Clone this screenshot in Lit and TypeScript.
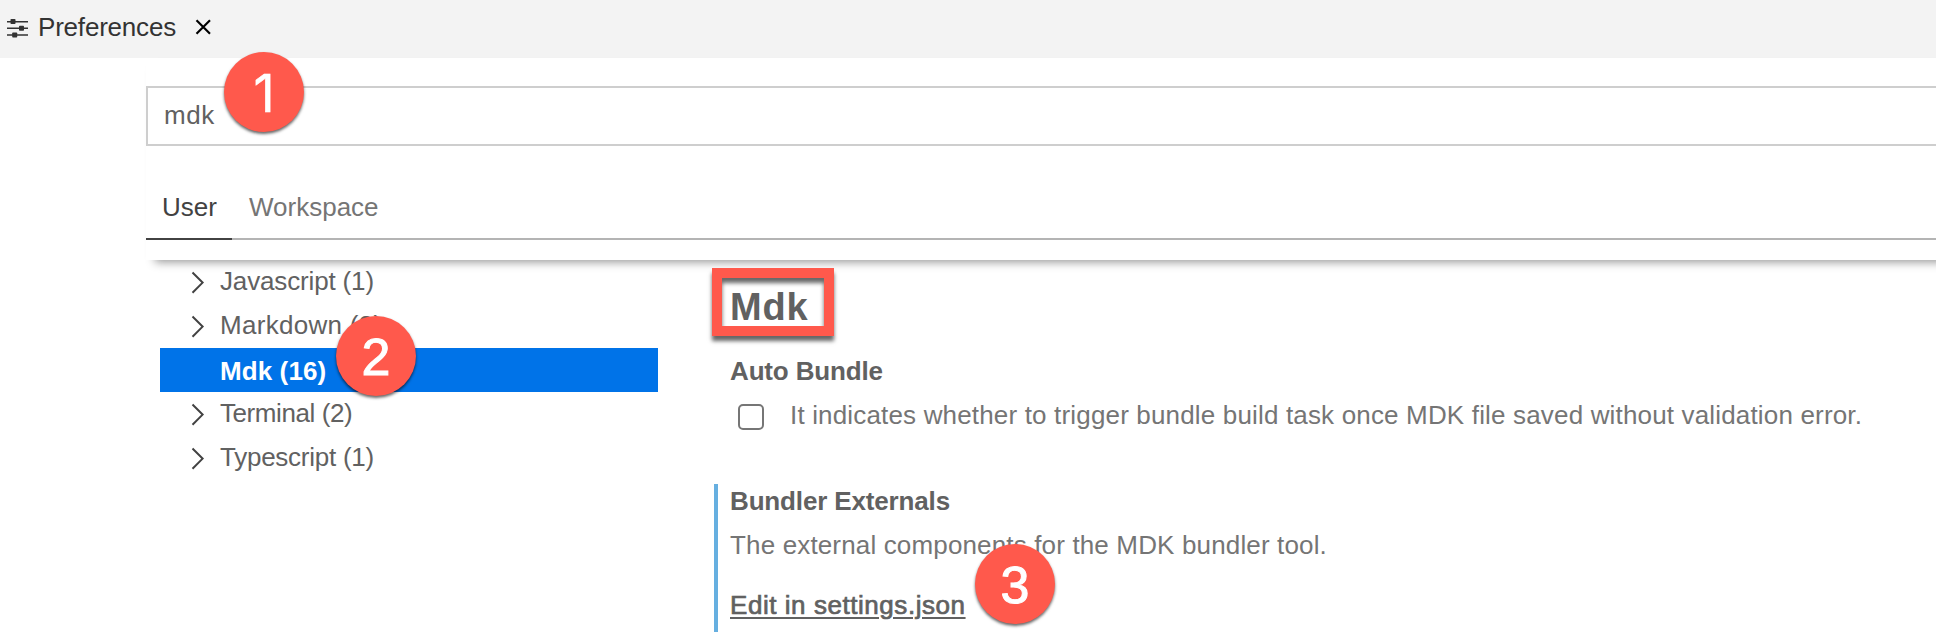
import { LitElement, html, svg, css } from "lit";
import { customElement, property } from "lit/decorators.js";
import { styleMap } from "lit/directives/style-map.js";

const chevron = svg`<path d="M32.5 12.5 L42.6 22.6 L32.5 32.7" />`;

@customElement("step-badge")
class StepBadge extends LitElement {
  static styles = css`
    :host {
      display: flex;
      width: 80px;
      height: 80px;
      border-radius: 50%;
      background: #ff594c;
      box-shadow: 0 2px 3px rgba(0, 0, 0, 0.6);
      color: #fff;
      font: 52px/83px "Liberation Sans", Arial, sans-serif;
      justify-content: center;
      -webkit-text-stroke: 1px #fff;
    }
  `;
  render() {
    return html`<slot></slot>`;
  }
}

@customElement("tree-row")
class TreeRow extends LitElement {
  @property() label = "";
  @property({ type: Number }) tracking = 0;
  @property({ type: Boolean, reflect: true }) selected = false;

  static styles = css`
    :host {
      display: flex;
      align-items: flex-start;
      height: 44px;
      line-height: 42px;
      color: #616161;
      white-space: nowrap;
    }
    :host([selected]) {
      background: #0073e8;
      color: #fff;
      font-weight: bold;
      line-height: 46px;
    }
    .twisty {
      width: 60px;
      height: 44px;
      flex: none;
    }
  `;
  render() {
    return html`
      <svg class="twisty" viewBox="0 0 60 44" fill="none" stroke="#424242" stroke-width="2">
        ${this.selected ? null : chevron}
      </svg>
      <span style=${styleMap({ letterSpacing: `${this.tracking}px` })}>${this.label}</span>
    `;
  }
}

@customElement("app-root")
class AppRoot extends LitElement {
  static styles = css`
    * {
      box-sizing: border-box;
    }
    :host {
      display: block;
      position: relative;
      width: 100%;
      height: 640px;
      overflow: hidden;
      background: #fff;
      font: 26px/30px "Liberation Sans", Arial, sans-serif;
      color: #616161;
    }
    .titlebar {
      display: flex;
      height: 58px;
      background: #f3f3f3;
      color: #333;
      padding-left: 7px;
      line-height: 54px;
    }
    .sliders {
      width: 21px;
      height: 20px;
      margin: 18px 10px 0 0;
    }
    .title {
      width: 138px;
      letter-spacing: -0.2px;
    }
    .close {
      width: 17px;
      height: 16px;
      margin: 19px 0 0 19px;
    }
    .header {
      position: relative;
      height: 202px;
      margin: 0 -20px 0 146px;
      padding-top: 28px;
      background: #fff;
      box-shadow: 5px 6px 9px -4px rgba(0, 0, 0, 0.42);
    }
    .search {
      height: 60px;
      border: 2px solid #cecece;
      padding-left: 16px;
      line-height: 54px;
      letter-spacing: 0.6px;
    }
    .tabs {
      display: flex;
      height: 94px;
      border-bottom: 2px solid #b4b4b4;
    }
    .tab {
      height: 94px;
      padding: 46px 16px 0 17px;
      color: #757575;
    }
    .tab.active {
      width: 86px;
      padding-right: 0;
      padding-left: 16px;
      color: #424242;
      border-bottom: 2px solid #424242;
    }
    .main {
      display: flex;
      padding-left: 160px;
    }
    .tree {
      width: 498px;
    }
    .settings {
      margin-left: 56px;
      padding-left: 16px;
      white-space: nowrap;
      padding-top: 20px;
    }
    .heading {
      margin: 0;
      height: 76px;
      font-size: 38px;
      line-height: 54px;
      font-weight: bold;
      letter-spacing: 0.8px;
    }
    .name {
      height: 30px;
      font-weight: bold;
      letter-spacing: -0.15px;
    }
    .check {
      display: flex;
      margin-top: 14px;
      height: 30px;
      color: #757575;
      letter-spacing: 0.165px;
    }
    .box {
      width: 26px;
      height: 26px;
      margin: 4px 26px 0 8px;
      border: 2px solid #767676;
      border-radius: 5px;
    }
    .modified {
      margin: 54px 0 0 -16px;
      height: 148px;
      border-left: 4px solid #66afe0;
      padding: 2px 0 0 12px;
    }
    .desc {
      margin-top: 14px;
      color: #757575;
      letter-spacing: 0.15px;
    }
    .link {
      display: inline-block;
      margin-top: 30px;
      letter-spacing: 0.55px;
      -webkit-text-stroke: 0.7px #616161;
      text-decoration: underline;
      text-decoration-thickness: 2px;
      text-underline-offset: 3px;
    }
    step-badge,
    .callout {
      position: absolute;
    }
    .one {
      left: 224px;
      top: 52px;
      font-family: Inter, sans-serif;
      -webkit-text-stroke: 0.5px #fff;
    }
    .two {
      left: 336px;
      top: 316px;
    }
    .three {
      left: 975px;
      top: 544px;
    }
    .callout {
      left: 712px;
      top: 268px;
      width: 122px;
      height: 68px;
      border: 10px solid #ff594c;
      box-shadow:
        0 5px 4px rgba(0, 0, 0, 0.6),
        inset 0 5px 4px rgba(0, 0, 0, 0.6);
    }
  `;

  private tree = [
    { label: "Javascript (1)", tracking: -0.15 },
    { label: "Markdown (2)", tracking: 0.3 },
    { label: "Mdk (16)", tracking: 0.1, selected: true },
    { label: "Terminal (2)", tracking: -0.42 },
    { label: "Typescript (1)", tracking: -0.25 },
  ];

  render() {
    return html`
      <div class="titlebar">
        <svg class="sliders" viewBox="0 0 21 20" fill="#333">
          <path d="M0 3h21v1.4H0zM0 9.6h21v1.4H0zM0 16.3h21v1.4H0z" />
          <rect x="3.5" y="1" width="5" height="5" rx="0.8" />
          <rect x="12" y="7.8" width="5" height="5" rx="0.8" />
          <rect x="5.2" y="14.5" width="5" height="5" rx="0.8" />
        </svg>
        <span class="title">Preferences</span>
        <svg class="close" viewBox="0 0 17 16" stroke="#000" stroke-width="2.2">
          <path d="M1.5 1.3 L15 14.7 M15 1.3 L1.5 14.7" />
        </svg>
      </div>
      <div class="header">
        <div class="search">mdk</div>
        <div class="tabs">
          <div class="tab active">User</div>
          <div class="tab">Workspace</div>
        </div>
      </div>
      <div class="main">
        <div class="tree">
          ${this.tree.map(
            (r) => html`<tree-row .label=${r.label} .tracking=${r.tracking} ?selected=${r.selected}></tree-row>`
          )}
        </div>
        <div class="settings">
          <h2 class="heading">Mdk</h2>
          <div class="name">Auto Bundle</div>
          <div class="check">
            <span class="box"></span>
            <span>It indicates whether to trigger bundle build task once MDK file saved without validation error.</span>
          </div>
          <div class="modified">
            <div class="name">Bundler Externals</div>
            <div class="desc">The external components for the MDK bundler tool.</div>
            <a class="link">Edit in settings.json</a>
          </div>
        </div>
      </div>
      <div class="callout"></div>
      <step-badge class="one">1</step-badge>
      <step-badge class="two">2</step-badge>
      <step-badge class="three">3</step-badge>
    `;
  }
}
